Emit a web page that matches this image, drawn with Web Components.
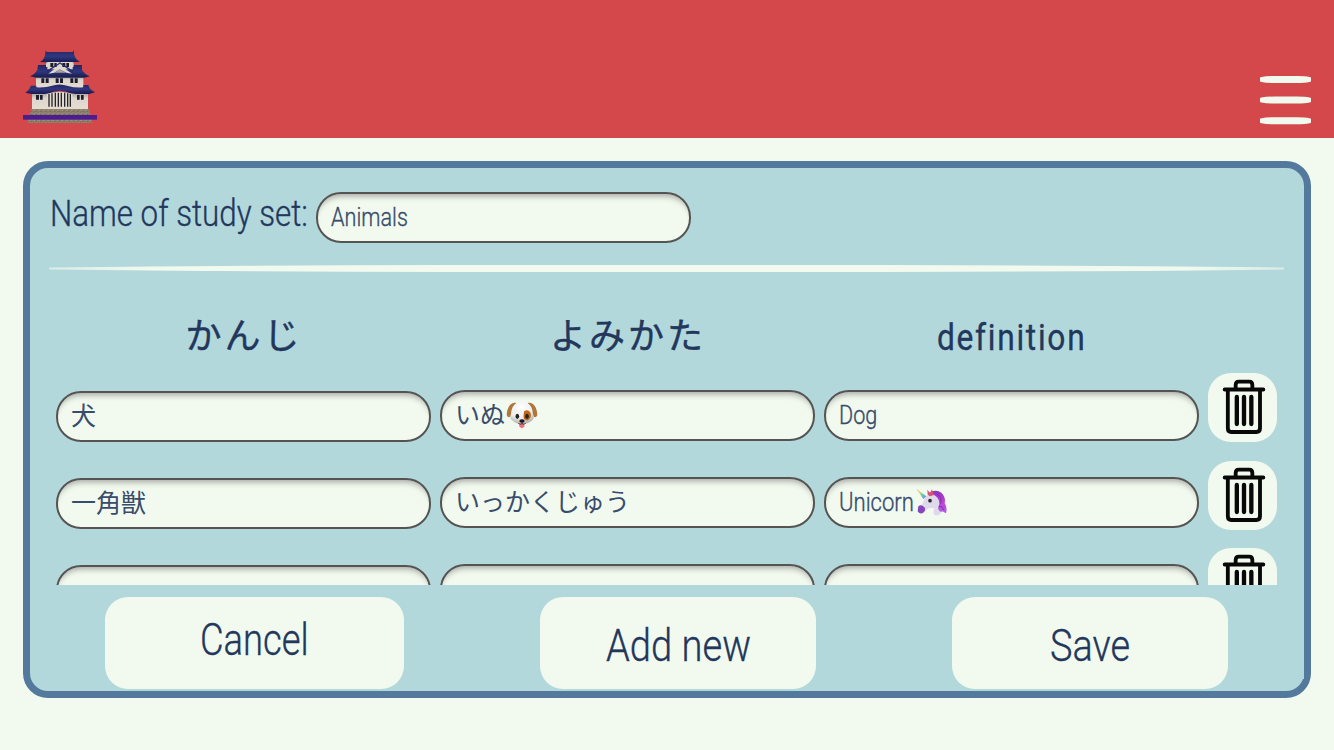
<!DOCTYPE html>
<html lang="en">
<head>
<meta charset="utf-8">
<title>Study set</title>
<style>
body{margin:0;background:#f2faef;color:#22375b;font-family:Roboto,"Noto Sans CJK JP",sans-serif;width:1334px;height:750px;overflow:hidden}
</style>
</head>
<body>
<study-app></study-app>
<script>
class Base extends HTMLElement{
  connectedCallback(){ if(!this.shadowRoot){this.attachShadow({mode:'open'}).innerHTML=this.render(); this.ready();} }
  ready(){}
}
/* Text condensed horizontally to a given advance width */
customElements.define('fit-text',class extends Base{
  render(){
    const a=n=>this.getAttribute(n);
    return `<style>:host{display:block;flex:none;width:${a('w')}px;white-space:nowrap;font-size:${a('size')}px;font-weight:${a('weight')||300};line-height:${a('line')}px;letter-spacing:${a('track')||0}px}
    span{display:inline-block;vertical-align:top;transform-origin:0 50%;-webkit-text-stroke:.35px currentColor}</style><span><slot></slot></span>`;
  }
  ready(){
    const s=this.shadowRoot.querySelector('span');
    s.style.transform=`scaleX(${this.getAttribute('w')/s.offsetWidth})`;
  }
});
customElements.define('castle-logo',class extends Base{
  render(){return `<style>:host{display:block;width:100px;height:100px}svg{display:block}</style>
  <svg width="100" height="100" viewBox="0 0 300 300">
  <defs>
   <linearGradient id="r" x2="0" y2="1"><stop offset="0" stop-color="#23265f"/><stop offset=".5" stop-color="#30377f"/><stop offset="1" stop-color="#171a4b"/></linearGradient>
   <linearGradient id="w" x2="0" y2="1"><stop offset="0" stop-color="#a39d98"/><stop offset=".35" stop-color="#ddd6cd"/><stop offset="1" stop-color="#e5ddd2"/></linearGradient>
   <pattern id="s" width="14" height="10" patternUnits="userSpaceOnUse"><rect width="14" height="10" fill="#8a7d69"/><path d="M0 1h6M9 6h5M3 8h4" stroke="#a0927a" stroke-width="3"/><path d="M6 4h5M0 6h3" stroke="#6e6454" stroke-width="3"/></pattern>
  </defs>
  <path d="M64 206H237L247 249H53Z" fill="url(#s)"/>
  <path d="M66 158H234V207H66Z" fill="url(#w)"/>
  <path d="M78 108H220V144H78Z" fill="url(#w)"/>
  <path d="M108 64H191V92H108Z" fill="url(#w)"/>
  <path d="M107 31L110 36H188L191 30L193 46Q197 60 210 65L150 68L90 66Q102 60 105 46Z" fill="url(#r)"/>
  <path d="M84 75H108V81L191 81V75H216V90Q224 103 240 109L222 113H80L60 109Q76 101 82 89Z" fill="url(#r)"/>
  <path d="M112 66H188V88H112Z" fill="#ddd6cf"/>
  <path d="M63 137H79V142Q110 143 123 138Q149 129 174 138Q195 144 220 142V135H235Q239 149 255 157L238 162H198L182 160Q150 144 117 160L104 162H64L46 158Q58 150 63 137Z" fill="url(#r)"/>
  <path d="M121 69h9v12h-9zM133 69h7v12h-7zM157 69h9v12h-9zM169 69h8v12h-8zM94 115h9v14H94zM107 115h9v14h-9zM137 115h9v14h-9zM150 115h9v14h-9zM181 115h9v14h-9zM194 115h9v14h-9zM78 165h9v14h-9zM90 165h8v14h-8zM201 165h8v14h-8zM213 165h8v14h-8z" fill="#1d1e2c"/>
  <path d="M115 101L149 75L186 101L169 98L149 88L133 98Z" fill="#ddd8d2"/>
  <path d="M134 98L149 88L168 98Z" fill="#aaa39c"/><path d="M110 95L150 69L189 95" fill="none" stroke="#292d6c" stroke-width="4"/>
  <path d="M110 163Q149 147 187 163V205H110Z" fill="#e3dbd0"/>
  <path d="M117 162v38M126 160v40M136 158v42M145 158v42M154 158v42M164 158v42M173 160v40M181 162v38" stroke="#25252c" stroke-width="4"/>
  <rect x="39" y="225" width="222" height="14" fill="#4e1c91"/>
  </svg>`}
});
customElements.define('menu-icon',class extends Base{
  render(){return `<style>:host{display:block;width:51px}svg{display:block}</style>
  <svg width="51" height="49" viewBox="0 0 51 49" fill="#f2faef"><defs><path id="b" d="M0 2Q0 1 1.500 1Q6 0 14 0H37Q45 0 49.500 1Q51 1 51 2V5Q51 6 49.500 6Q45 7 37 7H14Q6 7 1.500 6Q0 6 0 5Z"/></defs><use href="#b"/><use href="#b" y="20.600"/><use href="#b" y="41.200"/></svg>`}
});
customElements.define('app-header',class extends Base{
  render(){return `<style>:host{display:flex;justify-content:space-between;box-sizing:border-box;height:138px;background:#d4484b;padding:40px 23px 0 10px;overflow:hidden}menu-icon{margin-top:35.700px}</style><castle-logo></castle-logo><menu-icon></menu-icon>`}
});
customElements.define('text-field',class extends Base{
  render(){return `<style>:host{display:flex;flex:none;box-sizing:border-box;width:375px;height:51px;border:2px solid #555453;border-radius:25px;background:#f2faef;box-shadow:inset 0 7px 6px -5px #a0a49e;padding-left:13px;color:#384c6b;align-items:flex-start}
  </style><slot></slot>`}
});
customElements.define('dog-face',class extends Base{
  render(){return `<style>:host{display:block;margin:9px 0 0 1px}svg{display:block}</style><svg width="32" height="29" viewBox="0 0 96 87">
  <defs><radialGradient id="f" cx=".45" cy=".25" r=".75"><stop stop-color="#fff"/><stop offset=".65" stop-color="#eee"/><stop offset="1" stop-color="#b5b3b2"/></radialGradient></defs>
  <path d="M40 65h15v11q-7 12-15 0z" fill="#ee7180"/>
  <path d="M31 6C14 2 3 19 2 42Q7 54 14 45Q19 36 23 23ZM65 6C82 2 93 19 94 42Q89 54 82 45Q77 36 73 23Z" fill="#b0763a"/>
  <path d="M48 4C27 2 17 16 15 39Q8 52 22 61Q35 72 48 66Q61 72 75 61Q88 52 81 39C79 16 69 2 48 4Z" fill="url(#f)"/>
  <path d="M54 31Q67 22 74 36Q78 52 66 58Q50 60 53 41Z" fill="#bd691b"/>
  <ellipse cx="34" cy="46" rx="5.500" ry="8" fill="#282322"/><ellipse cx="63" cy="46" rx="5.500" ry="8" fill="#282322"/>
  <ellipse cx="48" cy="60" rx="8" ry="5" fill="#191719"/><path d="M48 63v5M37 67q6 5 11 1q5 4 11-1" fill="none" stroke="#31272a" stroke-width="2.500"/></svg>`}
});
customElements.define('unicorn-face',class extends Base{
  render(){return `<style>:host{display:block;margin:9px 0 0 2px}svg{display:block}</style><svg width="31" height="29" viewBox="0 0 93 87">
  <defs><linearGradient id="h" x2="1" y2="1"><stop stop-color="#f19d55"/><stop offset=".35" stop-color="#ded767"/><stop offset=".6" stop-color="#62cbb5"/><stop offset="1" stop-color="#8d78e6"/></linearGradient>
  <linearGradient id="m" x2="0" y2="1"><stop stop-color="#8e32bd"/><stop offset=".5" stop-color="#c044d7"/><stop offset="1" stop-color="#ad60e3"/></linearGradient></defs>
  <path d="M39 14Q60 3 76 14Q90 28 86 45Q95 60 90 76L79 70L67 78L62 47Z" fill="url(#m)"/>
  <path d="M29 24Q49 12 63 28Q75 43 67 56Q65 69 77 72Q69 86 55 81Q49 72 55 61Q41 56 27 69Q18 79 9 73Q1 65 9 57Q22 48 24 35Z" fill="#dfdaea"/>
  <path d="M7 55Q16 48 25 58Q30 66 24 72Q13 82 5 70Z" fill="#8546bd"/>
  <path d="M35 20L34 5L42 15L48 4L54 21L42 25Z" fill="#d45376"/>
  <path d="M1 2L31 25L22 33Z" fill="url(#h)"/>
  <circle cx="42" cy="38" r="5.500" fill="#292536"/><path d="M62 18Q80 28 74 47M69 55Q82 55 82 66" fill="none" stroke="#7930a8" stroke-width="3"/></svg>`}
});
customElements.define('trash-button',class extends Base{
  render(){return `<style>:host{display:block;flex:none;width:69px;height:69px;margin-top:-.600px;border-radius:23px;background:#f2faef}svg{display:block}</style>
  <svg width="69" height="69" viewBox="0 0 207 207" fill="none" stroke="#080808" stroke-width="11.500" stroke-linecap="round" stroke-linejoin="round"><path d="M50 49.500H166M83 48V36Q83 26 93 26H123Q133 26 133 36V48M59.500 50V166Q59.500 177 70 177H145Q156 177 156 166V50" /><path d="M86.500 72V153M108 72V153M130 72V153" stroke-width="13"/></svg>`}
});
customElements.define('card-row',class extends Base{
  render(){return `<style>:host{display:flex;gap:9px;height:87.200px;align-items:flex-start}
  ::slotted(text-field){margin-top:15.700px}::slotted(text-field:first-child){margin-top:16.500px!important}</style><slot></slot><trash-button></trash-button>`}
});
customElements.define('rule-line',class extends Base{
  render(){return `<style>:host{display:block;height:7px}svg{display:block;width:100%;height:7px}</style>
  <svg viewBox="0 0 1236 7" preserveAspectRatio="none"><defs><linearGradient id="g"><stop stop-color="#f2faef" stop-opacity=".6"/><stop offset=".08" stop-color="#f2faef"/><stop offset=".92" stop-color="#f2faef"/><stop offset="1" stop-color="#f2faef" stop-opacity=".6"/></linearGradient></defs><path d="M0 2.500Q200 .3 400 0H836Q1036 .3 1236 2.500V4.500Q1036 6.700 836 7H400Q200 6.700 0 4.500Z" fill="url(#g)"/></svg>`}
});
customElements.define('action-button',class extends Base{
  render(){return `<style>:host{display:flex;justify-content:center;box-sizing:border-box;width:276px;height:92px;border-radius:23px;background:#f2faef}:host([wide]){width:299px}</style><slot></slot>`}
});
customElements.define('study-panel',class extends Base{
  render(){return `<style>
  :host{display:flex;flex-direction:column;box-sizing:border-box;margin:23px 23px 0;height:537px;border:7px solid #53799c;border-radius:25px;background:#b2d8db}
  .name{display:flex;gap:8px;padding:24px 0 0 20px;height:51px}
  rule-line{margin:22px 20px 0 19px}
  .list{height:313px;overflow:hidden;box-sizing:border-box;padding-left:26px}
  .heads{display:grid;grid-template-columns:375px 375px 375px;column-gap:9px;height:102px}
  .heads>*{justify-self:center}
  .kana{font:400 36px/123px "Noto Sans CJK JP",sans-serif;letter-spacing:3px;padding-left:1px;-webkit-text-stroke:.4px currentColor}
  .jp{font:400 25px/42px "Noto Sans CJK JP",sans-serif}
  .bar{display:flex;align-items:flex-start;padding:12px 76px 0 75px;margin-left:0;height:94px;box-sizing:border-box;justify-content:space-between;
    background:linear-gradient(#b2d8db,#b2d8db) right bottom/40px 40px no-repeat}
  </style>
  <div class="name"><fit-text w="258" size="37.500" line="43">Name of study set:</fit-text><text-field><fit-text w="77" size="25" line="47">Animals</fit-text></text-field></div>
  <rule-line></rule-line>
  <div class="list">
   <div class="heads"><span class="kana">かんじ</span><span class="kana">よみかた</span><fit-text w="149" size="37" line="132" weight="400" track="2">definition</fit-text></div>
   <card-row><text-field><span class="jp">犬</span></text-field><text-field><span class="jp">いぬ</span><dog-face></dog-face></text-field><text-field><fit-text w="38" size="25" line="48">Dog</fit-text></text-field></card-row>
   <card-row><text-field><span class="jp">一角獣</span></text-field><text-field><span class="jp">いっかくじゅう</span></text-field><text-field><fit-text w="75" size="25" line="48">Unicorn</fit-text><unicorn-face></unicorn-face></text-field></card-row>
   <card-row><text-field></text-field><text-field></text-field><text-field></text-field></card-row>
  </div>
  <div class="bar"><action-button wide><fit-text w="109" size="45" line="85">Cancel</fit-text></action-button><action-button><fit-text w="145" size="45" line="98">Add new</fit-text></action-button><action-button><fit-text w="80" size="45" line="98">Save</fit-text></action-button></div>`}
});
customElements.define('study-app',class extends Base{
  render(){return `<style>:host{display:block}</style><app-header></app-header><study-panel></study-panel>`}
});
</script>
</body>
</html>
